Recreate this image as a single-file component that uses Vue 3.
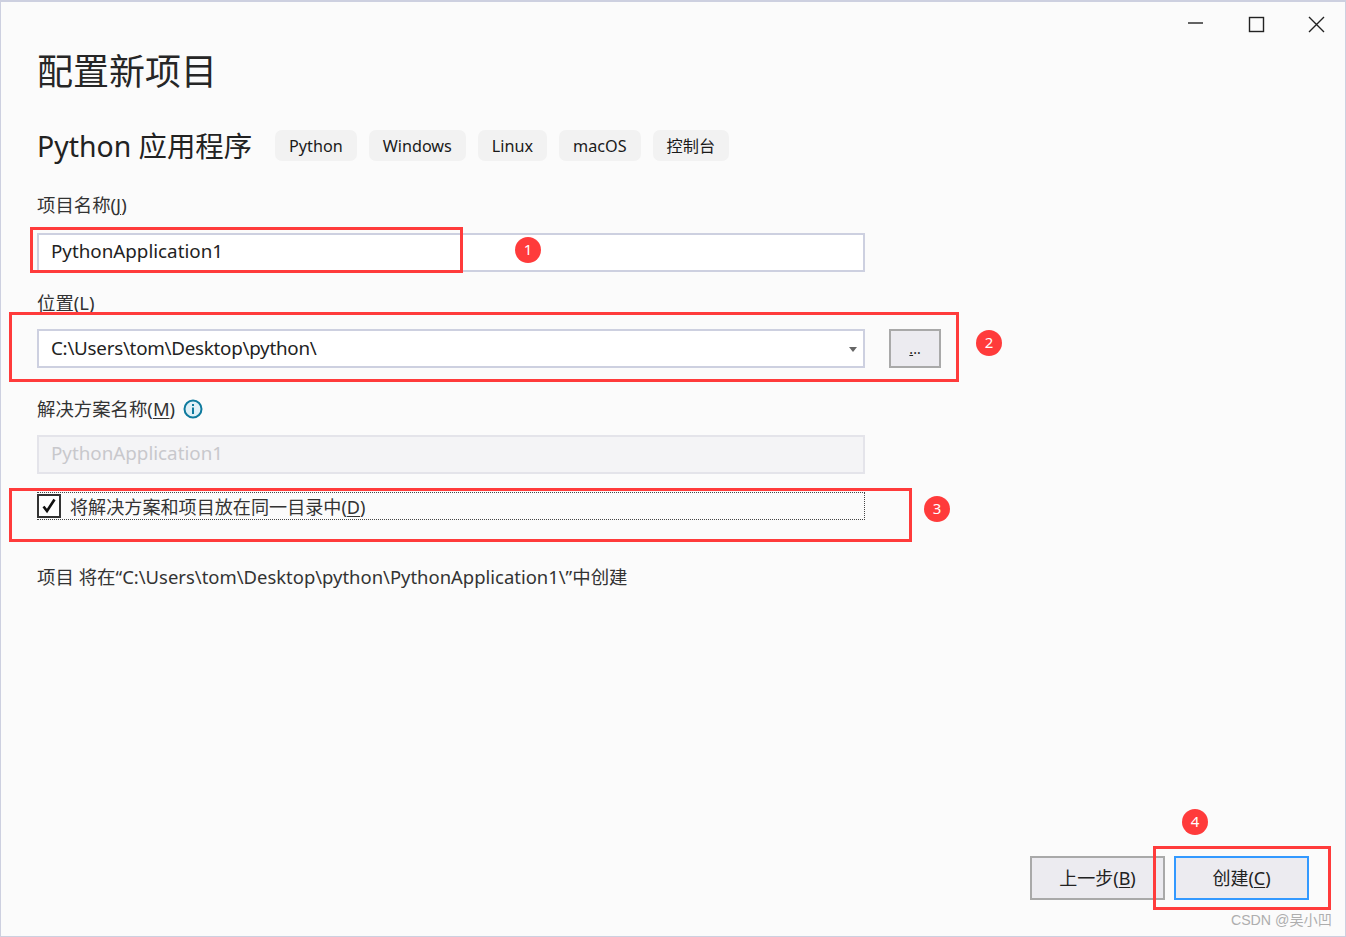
<script setup>
const tags = ['Python', 'Windows', 'Linux', 'macOS', '控制台']
const marks = [
  { n: 'm1', x: 30, y: 227, w: 433, h: 46 },
  { n: 'm2', x: 9, y: 312, w: 950, h: 70 },
  { n: 'm3', x: 9, y: 488, w: 903, h: 54 },
  { n: 'm4', x: 1153, y: 846, w: 178, h: 64 }
]
const badges = [
  { t: '1', x: 528, y: 250 },
  { t: '2', x: 989, y: 343 },
  { t: '3', x: 937, y: 509 },
  { t: '4', x: 1195, y: 822 }
]
</script>

<template>
  <div class="win">
    <div class="caption">
      <svg width="20" height="20" viewBox="0 0 20 20"><path d="M2 9H17" /></svg>
      <svg width="20" height="20" viewBox="0 0 20 20"><rect x="3.5" y="3.5" width="14" height="14" /></svg>
      <svg width="20" height="20" viewBox="0 0 20 20"><path d="M3 3L18 18M18 3L3 18" /></svg>
    </div>
    <main class="body">
      <h1>配置新项目</h1>
      <div class="sub">
        <h2>Python 应用程序</h2>
        <div class="tags"><span v-for="t in tags" :key="t" class="tag">{{ t }}</span></div>
      </div>
      <div class="label first">项目名称(<u>J</u>)</div>
      <div class="field">PythonApplication1</div>
      <div class="label second">位置(<u>L</u>)</div>
      <div class="row">
        <div class="field combo">C:\Users\tom\Desktop\python\<i class="caret"></i></div>
        <div class="dots"><u>.</u>..</div>
      </div>
      <div class="label third">
        解决方案名称(<u>M</u>)
        <svg class="info" width="20" height="20" viewBox="0 0 20 20">
          <circle cx="10" cy="10" r="8.5" fill="#dff0f7" stroke="#0e7a9e" stroke-width="2" />
          <rect x="9" y="8.5" width="2" height="6.5" fill="#0e7a9e" />
          <rect x="9" y="5" width="2" height="2" fill="#0e7a9e" />
        </svg>
      </div>
      <div class="field disabled">PythonApplication1</div>
      <div class="check">
        <span class="box">
          <svg width="18" height="18" viewBox="0 0 18 18"><path d="M3.5 9.5L7 14L14.5 2.5" /></svg>
        </span>
        <span class="check-text">将解决方案和项目放在同一目录中(<u>D</u>)</span>
      </div>
      <p class="note">项目 将在“C:\Users\tom\Desktop\python\PythonApplication1\”中创建</p>
      <div class="actions">
        <div class="btn">上一步(<u>B</u>)</div>
        <div class="btn primary">创建(<u>C</u>)</div>
      </div>
    </main>
    <div class="mark" v-for="m in marks" :key="m.n"
      :style="{ left: m.x + 'px', top: m.y + 'px', width: m.w + 'px', height: m.h + 'px' }"></div>
    <div class="badge" v-for="b in badges" :key="b.t"
      :style="{ left: b.x - 13 + 'px', top: b.y - 13 + 'px' }">{{ b.t }}</div>
    <div class="wm">CSDN @吴小凹</div>
  </div>
</template>

<style>
html, body { margin: 0; background: #fbfbfb; }
</style>

<style scoped>
.win {
  position: relative;
  width: 1346px;
  height: 937px;
  box-sizing: border-box;
  background: #fbfbfb;
  border: 1px solid #cdd0e0;
  border-top-width: 2px;
  overflow: hidden;
  color: #222;
  font-family: "Noto Sans", "Noto Sans CJK SC", sans-serif;
}
.caption {
  display: flex;
  justify-content: flex-end;
  gap: 40px;
  height: 20px;
  padding: 12px 19px 0 0;
}
.caption svg { fill: none; stroke: #222; stroke-width: 1.4; }
.body { padding: 0 0 0 36px; }
h1 {
  margin: 0;
  padding-top: 13px;
  font-size: 36px;
  line-height: 50px;
  font-weight: 400;
  color: #262626;
}
.sub { display: flex; align-items: center; margin-top: 29px; height: 40px; }
h2 { margin: 0; font-size: 28.4px; line-height: 40px; font-weight: 400; color: #222; width: 238px; white-space: nowrap; }
.tags { display: flex; gap: 12px; margin-bottom: 2px; }
.tag {
  height: 31px;
  padding: 0 14px;
  background: #f2f2f2;
  border-radius: 7px;
  font-size: 16.2px;
  line-height: 33px;
  color: #1a1a1a;
}
.label { font-size: 18.4px; line-height: 26px; color: #333; }
.label u, .check u, .btn u { text-underline-offset: 2px; text-decoration-thickness: 1px; }
.first { margin-top: 26px; }
.second { margin-top: 18px; }
.third { margin-top: 28px; display: flex; align-items: center; }
.info { margin-left: 8px; }
.field {
  position: relative;
  box-sizing: border-box;
  width: 828px;
  height: 39px;
  margin-top: 15px;
  padding-left: 12px;
  background: #fff;
  border: 2px solid #cdd0e0;
  font-size: 18.8px;
  line-height: 33px;
  color: #222;
  white-space: nowrap;
}
.second + .row { margin-top: 13px; }
.row { display: flex; gap: 24px; }
.row .field { margin-top: 0; }
.combo { letter-spacing: -0.26px; line-height: 34px; }
.caret {
  position: absolute;
  right: 6px;
  top: 16px;
  width: 0;
  height: 0;
  border: 4px solid transparent;
  border-top: 5px solid #666;
  border-bottom: 0;
}
.dots {
  box-sizing: border-box;
  width: 52px;
  height: 39px;
  background: #ecebf0;
  border: 2px solid #a9a9a9;
  font-size: 14px;
  line-height: 36px;
  text-align: center;
  color: #222;
}
.disabled {
  margin-top: 13px;
  background: #f4f4f6;
  border-color: #e4e4ea;
  color: #c8c8cc;
}
.check {
  box-sizing: border-box;
  display: flex;
  align-items: center;
  gap: 9px;
  width: 828px;
  height: 28px;
  margin-top: 18px;
  border: 1px dotted #444;
  border-left: 0;
  font-size: 18.1px;
  color: #333;
}
.check-text { line-height: 28px; padding-top: 2px; }
.box {
  box-sizing: border-box;
  display: flex;
  align-items: center;
  justify-content: center;
  width: 24px;
  height: 24px;
  background: #fff;
  border: 2px solid #333;
}
.box svg { fill: none; stroke: #111; stroke-width: 2.6; }
.note { margin: 44px 0 0; font-size: 18.44px; line-height: 26px; color: #333; }
.actions {
  display: flex;
  justify-content: flex-end;
  gap: 9px;
  margin-top: 266px;
  padding-right: 36px;
}
.btn {
  box-sizing: border-box;
  width: 135px;
  height: 44px;
  background: #ecebf0;
  border: 2px solid #a9a9a9;
  font-size: 18px;
  line-height: 40px;
  text-align: center;
  color: #222;
}
.primary { border-color: #3399ff; }
.mark {
  position: absolute;
  box-sizing: border-box;
  margin: -2px 0 0 -1px;
  border: 3px solid #ff3b3b;
}
.badge {
  position: absolute;
  margin: -2px 0 0 -1px;
  width: 26px;
  height: 26px;
  border-radius: 50%;
  background: #ff3b3b;
  color: #fff;
  font-size: 15px;
  line-height: 24px;
  text-align: center;
}
.wm {
  position: absolute;
  right: 13px;
  bottom: 6px;
  font-family: "Liberation Sans", "Noto Sans CJK SC", sans-serif;
  font-size: 14.2px;
  line-height: 20px;
  color: #aeaeae;
}
</style>
